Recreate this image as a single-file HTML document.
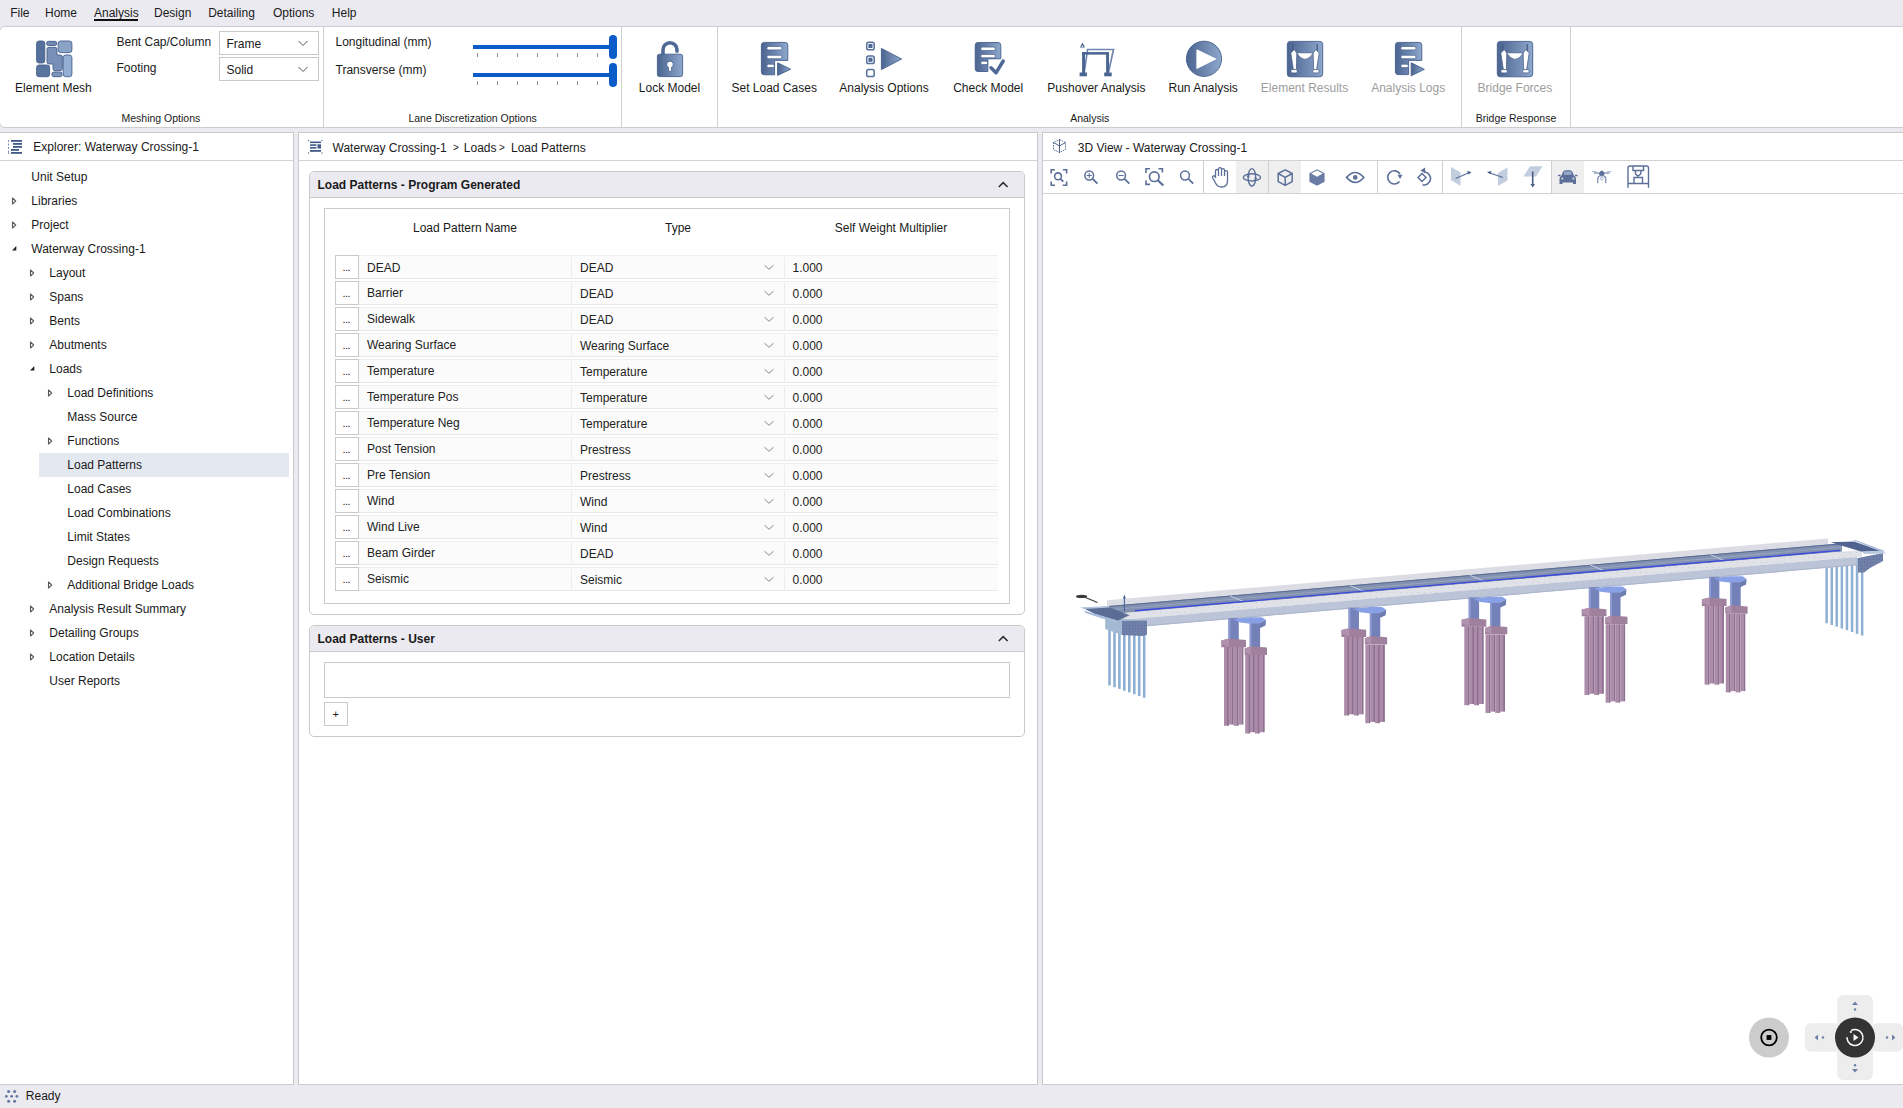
<!DOCTYPE html>
<html><head><meta charset="utf-8">
<style>
*{box-sizing:border-box;margin:0;padding:0}
html,body{width:1903px;height:1108px;overflow:hidden;background:#ECEAF1;font-family:"Liberation Sans",sans-serif;font-size:12px;color:#1a1a1a;position:relative}
.a{position:absolute}
.t{position:absolute;white-space:nowrap;line-height:16px;font-size:12px}
.c{transform:translateX(-50%)}
.g{position:absolute;white-space:nowrap;line-height:14px;font-size:10.5px;transform:translateX(-50%)}
.dis{color:#9d9d9d}
.panel{position:absolute;background:#fff;border:1px solid #cbcbcb}
.hline{position:absolute;height:1px;background:#cfcfcf}
.vline{position:absolute;width:1px;background:#d0d0d0}
.dd{position:absolute;border:1px solid #c8c8c8;background:#fff}
.btn{position:absolute;width:24px;height:24px;border:1px solid #c9c9c9;background:#fff}
.cell{position:absolute;height:24px;background:#fbfbfb;border-top:1px solid #efefef;border-bottom:1px solid #e8e8e8}
svg{position:absolute;overflow:visible}
</style></head><body>

<!-- MENU -->
<div class="t" style="left:10.2px;top:5.2px">File</div>
<div class="t" style="left:45px;top:5.2px">Home</div>
<div class="t" style="left:94px;top:5.2px">Analysis</div>
<div class="a" style="left:94px;top:19px;width:44px;height:2px;background:#111"></div>
<div class="t" style="left:154px;top:5.2px">Design</div>
<div class="t" style="left:208.2px;top:5.2px">Detailing</div>
<div class="t" style="left:273px;top:5.2px">Options</div>
<div class="t" style="left:331.8px;top:5.2px">Help</div>

<!-- RIBBON -->
<div class="a" style="left:-1px;top:26px;width:1910px;height:102px;background:#fff;border:1px solid #cdcdcd;border-radius:6px 0 0 6px"></div>
<div class="vline" style="left:323px;top:27px;height:100px"></div>
<div class="vline" style="left:621px;top:27px;height:100px"></div>
<div class="vline" style="left:717px;top:27px;height:100px"></div>
<div class="vline" style="left:1461px;top:27px;height:100px"></div>
<div class="vline" style="left:1570px;top:27px;height:100px"></div>


<svg style="left:0;top:0;z-index:2" width="1903" height="130" viewBox="0 0 1903 130">
<defs>
<linearGradient id="ig" x1="0" y1="0" x2="1" y2="0"><stop offset="0" stop-color="#4b6490"/><stop offset="1" stop-color="#8ea7cc"/></linearGradient>
<linearGradient id="ig2" x1="0" y1="0" x2="1" y2="0"><stop offset="0" stop-color="#6880aa"/><stop offset="1" stop-color="#98b2d6"/></linearGradient>
</defs>
<!-- Element Mesh -->
<g stroke="#44608c" stroke-width="0.9">
<rect x="36.6" y="41" width="8.2" height="22" rx="2.5" fill="#56709c"/>
<rect x="46.5" y="41.3" width="10.4" height="4.2" rx="2" fill="#7089b2"/>
<rect x="58.2" y="41" width="13.7" height="11.6" rx="2.5" fill="#89a2c6"/>
<path d="M47,49 Q47,47.3 49,47.3 L55,47.3 Q57,47.3 57,49.5 L57,55 L60.5,55 Q62.3,55 62.3,57 L62.3,68.5 Q62.3,70.7 60,70.7 L55,70.7 Q53,70.7 53,68.5 L53,64 L49,64 Q47,64 47,62 Z" fill="#7890b8"/>
<rect x="63.2" y="55" width="8.7" height="21.7" rx="2.5" fill="#92aed2"/>
<rect x="36.6" y="65" width="13" height="11.7" rx="2.5" fill="#5a74a0"/>
<rect x="51.9" y="72" width="10.2" height="4.7" rx="2" fill="#7c95bb"/>
</g>
<!-- sliders -->
<g fill="#0b5cc8">
<rect x="473" y="45" width="140" height="4"/><rect x="609" y="35" width="8" height="24" rx="4"/>
<rect x="473" y="73" width="140" height="4"/><rect x="609" y="63" width="8" height="24" rx="4"/>
</g>
<g stroke="#8f8f8f" stroke-width="1">
<path d="M477.5,53V57M497.5,53V57M517.5,53V57M537.5,53V57M557.5,53V57M577.5,53V57M597.5,53V57"/>
<path d="M477.5,81V85M497.5,81V85M517.5,81V85M537.5,81V85M557.5,81V85M577.5,81V85M597.5,81V85"/>
</g>
<!-- dropdown chevrons -->
<g stroke="#555" stroke-width="1" fill="none">
<path d="M298.5,41 L303,45.5 L307.5,41"/><path d="M298.5,67 L303,71.5 L307.5,67"/>
</g>
<!-- Lock -->
<path d="M663,54 V49.8 A7,7 0 0 1 677,49.8 V51.3" stroke="#4f6995" stroke-width="3.6" fill="none" stroke-linecap="round"/>
<rect x="657.4" y="54.2" width="25.2" height="22.4" rx="2.2" fill="url(#ig)" stroke="#44608c" stroke-width="0.9"/>
<path d="M670,61.2 A3.2,3.2 0 0 1 671.6,67.2 L671.6,70.3 Q671.6,71.2 670.7,71.2 L669.3,71.2 Q668.4,71.2 668.4,70.3 L668.4,67.2 A3.2,3.2 0 0 1 670,61.2 Z" fill="#fff" stroke="#3f5a86" stroke-width="0.8"/>
<!-- Set Load Cases --><path d="M764.2,42.4 H785.0 Q787.8,42.4 787.8,45.2 V60.4 H774.6 V74.8 H764.2 Q761.4,74.8 761.4,72.0 V45.2 Q761.4,42.4 764.2,42.4 Z" fill="url(#ig)" stroke="#44608c" stroke-width="0.9"/><rect x="766.8" y="46.5" width="15.2" height="3.4" rx="1.7" fill="#fff" stroke="#44608c" stroke-width="0.7"/><rect x="766.8" y="55.3" width="15.2" height="3.4" rx="1.7" fill="#fff" stroke="#44608c" stroke-width="0.7"/><rect x="766.8" y="64.2" width="7.6" height="3.4" rx="1.7" fill="#fff" stroke="#44608c" stroke-width="0.7"/><path d="M777.6,62.8 L790.6,69.2 L777.6,75.4 Z" fill="url(#ig)" stroke="#44608c" stroke-width="0.9" stroke-linejoin="round"/>
<!-- Analysis Options -->
<g stroke="#56709c" stroke-width="1.5" fill="none">
<rect x="866.7" y="42.2" width="7.5" height="7.5" rx="1.8"/><rect x="866.7" y="56" width="7.5" height="7.5" rx="1.8"/><rect x="866.7" y="69.4" width="7.5" height="7.2" rx="1.8"/>
</g>
<rect x="868.4" y="43.9" width="4.1" height="4.1" fill="#4f6894"/><rect x="868.4" y="57.7" width="4.1" height="4.1" fill="#4f6894"/>
<path d="M881.4,48.4 L901.6,59 L881.4,69.6 Z" fill="url(#ig)" stroke="#44608c" stroke-width="0.9" stroke-linejoin="round"/>
<!-- Check Model --><path d="M978.0,42.5 H998.0 Q1000.8,42.5 1000.8,45.3 V58.8 H987.9 V71.5 H978.0 Q975.2,71.5 975.2,68.7 V45.3 Q975.2,42.5 978.0,42.5 Z" fill="url(#ig)" stroke="#44608c" stroke-width="0.9"/><rect x="980.7" y="47.1" width="14.7" height="3.4" rx="1.7" fill="#fff" stroke="#44608c" stroke-width="0.7"/><rect x="980.7" y="54.4" width="14.7" height="3.4" rx="1.7" fill="#fff" stroke="#44608c" stroke-width="0.7"/><rect x="980.7" y="61.2" width="7" height="3.4" rx="1.7" fill="#fff" stroke="#44608c" stroke-width="0.7"/><path d="M991,67.8 L996,72.8 L1003.2,61" stroke="#4d6894" stroke-width="3.4" fill="none" stroke-linecap="round" stroke-linejoin="round"/>
<!-- Pushover -->
<path d="M1082.5,42.5 L1085,47.6 L1080,47.6 Z" fill="#44608c"/><path d="M1082.5,45.2 L1083.4,47 L1081.6,47 Z" fill="#fff"/>
<path d="M1084.3,71.8 L1087.6,49.5 L1113.5,49.5 L1108.6,71.8" stroke="#7088b0" stroke-width="1.7" fill="none" stroke-linejoin="miter"/>
<g fill="#4a6591">
<rect x="1082.1" y="52.1" width="26.8" height="2.5"/><rect x="1082.1" y="52.1" width="2.9" height="21"/><rect x="1106.1" y="52.1" width="2.9" height="21"/>
<rect x="1079.6" y="72.5" width="7.3" height="3.8"/><rect x="1104.2" y="72.5" width="7.5" height="3.8"/>
</g>
<!-- Run Analysis -->
<circle cx="1204" cy="58.8" r="17.6" fill="url(#ig)" stroke="#44608c" stroke-width="0.9"/>
<path d="M1197,50 L1215.5,59 L1197,68.3 Z" fill="#fff" stroke="#fff" stroke-width="1.2" stroke-linejoin="round"/>
<!-- Element Results -->
<g>
<rect x="1287.3" y="41.4" width="35.4" height="35.4" rx="3" fill="url(#ig)" stroke="#445f8b" stroke-width="0.9"/>
<path d="M1292.8,44 V51 M1317.2,44 V51" stroke="#3e5680" stroke-width="1.1"/>
<g fill="#fff" stroke="#3e5680" stroke-width="0.7">
<path d="M1296.5,52.8 H1313.5 Q1305,66 1296.5,52.8 Z"/>
<path d="M1294.2,49.6 L1296.8,53 L1296.4,69.8 L1293.4,69.8 L1290.8,53 Z"/>
<path d="M1315.8,49.6 L1313.2,53 L1313.6,69.8 L1316.6,69.8 L1319.2,53 Z"/>
<rect x="1291" y="69.6" width="6.2" height="3.3" rx="0.8"/><rect x="1312.8" y="69.6" width="6.2" height="3.3" rx="0.8"/>
</g>
</g>
<g transform="translate(210,0)">
<rect x="1287.3" y="41.4" width="35.4" height="35.4" rx="3" fill="url(#ig)" stroke="#445f8b" stroke-width="0.9"/>
<path d="M1292.8,44 V51 M1317.2,44 V51" stroke="#3e5680" stroke-width="1.1"/>
<g fill="#fff" stroke="#3e5680" stroke-width="0.7">
<path d="M1296.5,52.8 H1313.5 Q1305,66 1296.5,52.8 Z"/>
<path d="M1294.2,49.6 L1296.8,53 L1296.4,69.8 L1293.4,69.8 L1290.8,53 Z"/>
<path d="M1315.8,49.6 L1313.2,53 L1313.6,69.8 L1316.6,69.8 L1319.2,53 Z"/>
<rect x="1291" y="69.6" width="6.2" height="3.3" rx="0.8"/><rect x="1312.8" y="69.6" width="6.2" height="3.3" rx="0.8"/>
</g>
</g>
<!-- Analysis Logs --><path d="M1398.2,42.4 H1419.0 Q1421.8,42.4 1421.8,45.2 V60.4 H1408.6 V74.6 H1398.2 Q1395.4,74.6 1395.4,71.8 V45.2 Q1395.4,42.4 1398.2,42.4 Z" fill="url(#ig)" stroke="#44608c" stroke-width="0.9"/><rect x="1400.8" y="46.5" width="15.2" height="3.4" rx="1.7" fill="#fff" stroke="#44608c" stroke-width="0.7"/><rect x="1400.8" y="55.3" width="15.2" height="3.4" rx="1.7" fill="#fff" stroke="#44608c" stroke-width="0.7"/><rect x="1400.8" y="64.2" width="7.6" height="3.4" rx="1.7" fill="#fff" stroke="#44608c" stroke-width="0.7"/><path d="M1411.2,62.8 L1424.4,69.3 L1411.2,75.8 Z" fill="url(#ig)" stroke="#44608c" stroke-width="0.9" stroke-linejoin="round"/>
</svg>

<div class="dd" style="left:219px;top:31px;width:100px;height:24px"></div>
<div class="dd" style="left:219px;top:57px;width:100px;height:24px"></div>
<div class="t" style="left:116.5px;top:34px">Bent Cap/Column</div>
<div class="t" style="left:116.5px;top:59.5px">Footing</div>
<div class="t" style="left:226.5px;top:35.5px">Frame</div>
<div class="t" style="left:226.5px;top:61.5px">Solid</div>
<div class="t" style="left:335.5px;top:34px">Longitudinal (mm)</div>
<div class="t" style="left:335.5px;top:62px">Transverse (mm)</div>

<div class="t c" style="left:53.4px;top:80px">Element Mesh</div>
<div class="t c" style="left:669.5px;top:80px">Lock Model</div>
<div class="t c" style="left:774.2px;top:80px">Set Load Cases</div>
<div class="t c" style="left:884px;top:80px">Analysis Options</div>
<div class="t c" style="left:988.2px;top:80px">Check Model</div>
<div class="t c" style="left:1096.4px;top:80px">Pushover Analysis</div>
<div class="t c" style="left:1203.2px;top:80px">Run Analysis</div>
<div class="t c dis" style="left:1304.5px;top:80px">Element Results</div>
<div class="t c dis" style="left:1408.2px;top:80px">Analysis Logs</div>
<div class="t c dis" style="left:1514.9px;top:80px">Bridge Forces</div>

<div class="g" style="left:160.9px;top:111.4px">Meshing Options</div>
<div class="g" style="left:472.6px;top:111.4px">Lane Discretization Options</div>
<div class="g" style="left:1089.7px;top:111.2px">Analysis</div>
<div class="g" style="left:1516px;top:111.2px">Bridge Response</div>


<!-- PANELS -->
<div class="panel" style="left:-1px;top:132px;width:295px;height:953px"></div>
<div class="panel" style="left:298px;top:132px;width:740px;height:953px"></div>
<div class="panel" style="left:1042px;top:132px;width:870px;height:953px"></div>

<div class="hline" style="left:0;top:160px;width:293px;background:#d2d2d2"></div>
<div class="a" style="left:39px;top:453px;width:250px;height:24px;background:#E4E8F0"></div>
<div class="t" style="left:33.3px;top:138.7px">Explorer: Waterway Crossing-1</div>
<div class="t" style="left:31.3px;top:168.6px">Unit Setup</div>
<div class="t" style="left:31.3px;top:192.6px">Libraries</div>
<div class="t" style="left:31.3px;top:216.6px">Project</div>
<div class="t" style="left:31.3px;top:240.6px">Waterway Crossing-1</div>
<div class="t" style="left:49.3px;top:264.6px">Layout</div>
<div class="t" style="left:49.3px;top:288.6px">Spans</div>
<div class="t" style="left:49.3px;top:312.6px">Bents</div>
<div class="t" style="left:49.3px;top:336.6px">Abutments</div>
<div class="t" style="left:49.3px;top:360.6px">Loads</div>
<div class="t" style="left:67.3px;top:384.6px">Load Definitions</div>
<div class="t" style="left:67.3px;top:408.6px">Mass Source</div>
<div class="t" style="left:67.3px;top:432.6px">Functions</div>
<div class="t" style="left:67.3px;top:456.6px">Load Patterns</div>
<div class="t" style="left:67.3px;top:480.6px">Load Cases</div>
<div class="t" style="left:67.3px;top:504.6px">Load Combinations</div>
<div class="t" style="left:67.3px;top:528.6px">Limit States</div>
<div class="t" style="left:67.3px;top:552.6px">Design Requests</div>
<div class="t" style="left:67.3px;top:576.6px">Additional Bridge Loads</div>
<div class="t" style="left:49.3px;top:600.6px">Analysis Result Summary</div>
<div class="t" style="left:49.3px;top:624.6px">Detailing Groups</div>
<div class="t" style="left:49.3px;top:648.6px">Location Details</div>
<div class="t" style="left:49.3px;top:672.6px">User Reports</div>
<svg style="left:0;top:0" width="300" height="700"><g fill="none" stroke="#5a5a5a" stroke-width="1.1" stroke-linejoin="round"><path d="M12.5,198.0 L15.7,201.0 L12.5,204.0 Z"/><path d="M12.5,222.0 L15.7,225.0 L12.5,228.0 Z"/><path d="M16.3,246.0 L16.3,250.5 L12.0,250.5 Z" fill="#222" stroke="none"/><path d="M30.5,270.0 L33.7,273.0 L30.5,276.0 Z"/><path d="M30.5,294.0 L33.7,297.0 L30.5,300.0 Z"/><path d="M30.5,318.0 L33.7,321.0 L30.5,324.0 Z"/><path d="M30.5,342.0 L33.7,345.0 L30.5,348.0 Z"/><path d="M34.3,366.0 L34.3,370.5 L30.0,370.5 Z" fill="#222" stroke="none"/><path d="M48.5,390.0 L51.7,393.0 L48.5,396.0 Z"/><path d="M48.5,438.0 L51.7,441.0 L48.5,444.0 Z"/><path d="M48.5,582.0 L51.7,585.0 L48.5,588.0 Z"/><path d="M30.5,606.0 L33.7,609.0 L30.5,612.0 Z"/><path d="M30.5,630.0 L33.7,633.0 L30.5,636.0 Z"/><path d="M30.5,654.0 L33.7,657.0 L30.5,660.0 Z"/></g>
<g fill="#3f5a86"><rect x="11" y="140" width="11" height="1.8"/><rect x="13" y="143" width="9" height="1.8"/><rect x="13" y="146" width="9" height="1.8"/><rect x="11" y="149" width="8" height="1.8"/><rect x="11" y="152" width="11" height="1.8"/></g>
<g fill="#6f84aa"><rect x="8" y="140" width="0.9" height="2"/><rect x="8" y="143.5" width="0.9" height="2"/><rect x="8" y="147" width="0.9" height="2"/><rect x="8" y="150.5" width="0.9" height="2"/><rect x="8" y="152.5" width="0.9" height="1.5"/></g>
<g fill="#62769e"><circle cx="8.6" cy="1091.4" r="1.5"/><circle cx="14.6" cy="1091.4" r="1.5"/><circle cx="6.3" cy="1096.3" r="1.4"/><circle cx="11.6" cy="1096.3" r="1.4"/><circle cx="16.9" cy="1096.3" r="1.4"/><circle cx="8.6" cy="1101.2" r="1.5"/><circle cx="14.6" cy="1101.2" r="1.5"/></g>
</svg>
<div class="hline" style="left:299px;top:160px;width:738px;background:#d2d2d2"></div>
<div class="t" style="left:332.5px;top:140.2px">Waterway Crossing-1</div>
<div class="t" style="left:453px;top:140.2px;font-size:10px">&gt;</div>
<div class="t" style="left:463.8px;top:140.2px">Loads</div>
<div class="t" style="left:499px;top:140.2px;font-size:10px">&gt;</div>
<div class="t" style="left:511px;top:140.2px">Load Patterns</div>
<div class="a" style="left:309px;top:171px;width:716px;height:444px;border:1px solid #c9c9c9;border-radius:5px;background:#fff"></div>
<div class="a" style="left:310px;top:172px;width:714px;height:25px;background:#ECEAF1;border-radius:4px 4px 0 0;border-bottom:1px solid #c9c9c9;height:26px"></div>
<div class="t" style="left:317.5px;top:176.7px;font-weight:bold">Load Patterns - Program Generated</div>
<div class="a" style="left:324px;top:208px;width:686px;height:396px;border:1px solid #cbcbcb"></div>
<div class="t c" style="left:465px;top:219.6px">Load Pattern Name</div>
<div class="t c" style="left:678px;top:219.6px">Type</div>
<div class="t c" style="left:891px;top:219.6px">Self Weight Multiplier</div>
<div class="btn" style="left:335px;top:255px"></div>
<div class="cell" style="left:359px;top:255px;width:639px"></div>
<div class="a" style="left:571px;top:257px;width:1px;height:21px;background:#ececec"></div>
<div class="a" style="left:784px;top:257px;width:1px;height:21px;background:#ececec"></div>
<div class="t" style="left:342.5px;top:259.2px;font-size:11px;letter-spacing:-0.5px">...</div>
<div class="t" style="left:367px;top:259.6px;color:#222">DEAD</div>
<div class="t" style="left:580px;top:259.6px;color:#222">DEAD</div>
<div class="t" style="left:792.5px;top:259.6px;color:#222">1.000</div>
<div class="btn" style="left:335px;top:281px"></div>
<div class="cell" style="left:359px;top:281px;width:639px"></div>
<div class="a" style="left:571px;top:283px;width:1px;height:21px;background:#ececec"></div>
<div class="a" style="left:784px;top:283px;width:1px;height:21px;background:#ececec"></div>
<div class="t" style="left:342.5px;top:285.2px;font-size:11px;letter-spacing:-0.5px">...</div>
<div class="t" style="left:367px;top:284.8px;color:#222">Barrier</div>
<div class="t" style="left:580px;top:285.6px;color:#222">DEAD</div>
<div class="t" style="left:792.5px;top:285.6px;color:#222">0.000</div>
<div class="btn" style="left:335px;top:307px"></div>
<div class="cell" style="left:359px;top:307px;width:639px"></div>
<div class="a" style="left:571px;top:309px;width:1px;height:21px;background:#ececec"></div>
<div class="a" style="left:784px;top:309px;width:1px;height:21px;background:#ececec"></div>
<div class="t" style="left:342.5px;top:311.2px;font-size:11px;letter-spacing:-0.5px">...</div>
<div class="t" style="left:367px;top:310.8px;color:#222">Sidewalk</div>
<div class="t" style="left:580px;top:311.6px;color:#222">DEAD</div>
<div class="t" style="left:792.5px;top:311.6px;color:#222">0.000</div>
<div class="btn" style="left:335px;top:333px"></div>
<div class="cell" style="left:359px;top:333px;width:639px"></div>
<div class="a" style="left:571px;top:335px;width:1px;height:21px;background:#ececec"></div>
<div class="a" style="left:784px;top:335px;width:1px;height:21px;background:#ececec"></div>
<div class="t" style="left:342.5px;top:337.2px;font-size:11px;letter-spacing:-0.5px">...</div>
<div class="t" style="left:367px;top:336.8px;color:#222">Wearing Surface</div>
<div class="t" style="left:580px;top:337.6px;color:#222">Wearing Surface</div>
<div class="t" style="left:792.5px;top:337.6px;color:#222">0.000</div>
<div class="btn" style="left:335px;top:359px"></div>
<div class="cell" style="left:359px;top:359px;width:639px"></div>
<div class="a" style="left:571px;top:361px;width:1px;height:21px;background:#ececec"></div>
<div class="a" style="left:784px;top:361px;width:1px;height:21px;background:#ececec"></div>
<div class="t" style="left:342.5px;top:363.2px;font-size:11px;letter-spacing:-0.5px">...</div>
<div class="t" style="left:367px;top:362.8px;color:#222">Temperature</div>
<div class="t" style="left:580px;top:363.6px;color:#222">Temperature</div>
<div class="t" style="left:792.5px;top:363.6px;color:#222">0.000</div>
<div class="btn" style="left:335px;top:385px"></div>
<div class="cell" style="left:359px;top:385px;width:639px"></div>
<div class="a" style="left:571px;top:387px;width:1px;height:21px;background:#ececec"></div>
<div class="a" style="left:784px;top:387px;width:1px;height:21px;background:#ececec"></div>
<div class="t" style="left:342.5px;top:389.2px;font-size:11px;letter-spacing:-0.5px">...</div>
<div class="t" style="left:367px;top:388.8px;color:#222">Temperature Pos</div>
<div class="t" style="left:580px;top:389.6px;color:#222">Temperature</div>
<div class="t" style="left:792.5px;top:389.6px;color:#222">0.000</div>
<div class="btn" style="left:335px;top:411px"></div>
<div class="cell" style="left:359px;top:411px;width:639px"></div>
<div class="a" style="left:571px;top:413px;width:1px;height:21px;background:#ececec"></div>
<div class="a" style="left:784px;top:413px;width:1px;height:21px;background:#ececec"></div>
<div class="t" style="left:342.5px;top:415.2px;font-size:11px;letter-spacing:-0.5px">...</div>
<div class="t" style="left:367px;top:414.8px;color:#222">Temperature Neg</div>
<div class="t" style="left:580px;top:415.6px;color:#222">Temperature</div>
<div class="t" style="left:792.5px;top:415.6px;color:#222">0.000</div>
<div class="btn" style="left:335px;top:437px"></div>
<div class="cell" style="left:359px;top:437px;width:639px"></div>
<div class="a" style="left:571px;top:439px;width:1px;height:21px;background:#ececec"></div>
<div class="a" style="left:784px;top:439px;width:1px;height:21px;background:#ececec"></div>
<div class="t" style="left:342.5px;top:441.2px;font-size:11px;letter-spacing:-0.5px">...</div>
<div class="t" style="left:367px;top:440.8px;color:#222">Post Tension</div>
<div class="t" style="left:580px;top:441.6px;color:#222">Prestress</div>
<div class="t" style="left:792.5px;top:441.6px;color:#222">0.000</div>
<div class="btn" style="left:335px;top:463px"></div>
<div class="cell" style="left:359px;top:463px;width:639px"></div>
<div class="a" style="left:571px;top:465px;width:1px;height:21px;background:#ececec"></div>
<div class="a" style="left:784px;top:465px;width:1px;height:21px;background:#ececec"></div>
<div class="t" style="left:342.5px;top:467.2px;font-size:11px;letter-spacing:-0.5px">...</div>
<div class="t" style="left:367px;top:466.8px;color:#222">Pre Tension</div>
<div class="t" style="left:580px;top:467.6px;color:#222">Prestress</div>
<div class="t" style="left:792.5px;top:467.6px;color:#222">0.000</div>
<div class="btn" style="left:335px;top:489px"></div>
<div class="cell" style="left:359px;top:489px;width:639px"></div>
<div class="a" style="left:571px;top:491px;width:1px;height:21px;background:#ececec"></div>
<div class="a" style="left:784px;top:491px;width:1px;height:21px;background:#ececec"></div>
<div class="t" style="left:342.5px;top:493.2px;font-size:11px;letter-spacing:-0.5px">...</div>
<div class="t" style="left:367px;top:492.8px;color:#222">Wind</div>
<div class="t" style="left:580px;top:493.6px;color:#222">Wind</div>
<div class="t" style="left:792.5px;top:493.6px;color:#222">0.000</div>
<div class="btn" style="left:335px;top:515px"></div>
<div class="cell" style="left:359px;top:515px;width:639px"></div>
<div class="a" style="left:571px;top:517px;width:1px;height:21px;background:#ececec"></div>
<div class="a" style="left:784px;top:517px;width:1px;height:21px;background:#ececec"></div>
<div class="t" style="left:342.5px;top:519.2px;font-size:11px;letter-spacing:-0.5px">...</div>
<div class="t" style="left:367px;top:518.8px;color:#222">Wind Live</div>
<div class="t" style="left:580px;top:519.6px;color:#222">Wind</div>
<div class="t" style="left:792.5px;top:519.6px;color:#222">0.000</div>
<div class="btn" style="left:335px;top:541px"></div>
<div class="cell" style="left:359px;top:541px;width:639px"></div>
<div class="a" style="left:571px;top:543px;width:1px;height:21px;background:#ececec"></div>
<div class="a" style="left:784px;top:543px;width:1px;height:21px;background:#ececec"></div>
<div class="t" style="left:342.5px;top:545.2px;font-size:11px;letter-spacing:-0.5px">...</div>
<div class="t" style="left:367px;top:544.8px;color:#222">Beam Girder</div>
<div class="t" style="left:580px;top:545.6px;color:#222">DEAD</div>
<div class="t" style="left:792.5px;top:545.6px;color:#222">0.000</div>
<div class="btn" style="left:335px;top:567px"></div>
<div class="cell" style="left:359px;top:567px;width:639px"></div>
<div class="a" style="left:571px;top:569px;width:1px;height:21px;background:#ececec"></div>
<div class="a" style="left:784px;top:569px;width:1px;height:21px;background:#ececec"></div>
<div class="t" style="left:342.5px;top:571.2px;font-size:11px;letter-spacing:-0.5px">...</div>
<div class="t" style="left:367px;top:570.8px;color:#222">Seismic</div>
<div class="t" style="left:580px;top:571.6px;color:#222">Seismic</div>
<div class="t" style="left:792.5px;top:571.6px;color:#222">0.000</div>
<svg style="left:0;top:0;z-index:3" width="1040" height="750"><path d="M764.5,265.2 L769,269.3 L773.5,265.2 M764.5,291.2 L769,295.3 L773.5,291.2 M764.5,317.2 L769,321.3 L773.5,317.2 M764.5,343.2 L769,347.3 L773.5,343.2 M764.5,369.2 L769,373.3 L773.5,369.2 M764.5,395.2 L769,399.3 L773.5,395.2 M764.5,421.2 L769,425.3 L773.5,421.2 M764.5,447.2 L769,451.3 L773.5,447.2 M764.5,473.2 L769,477.3 L773.5,473.2 M764.5,499.2 L769,503.3 L773.5,499.2 M764.5,525.2 L769,529.3 L773.5,525.2 M764.5,551.2 L769,555.3 L773.5,551.2 M764.5,577.2 L769,581.3 L773.5,577.2" stroke="#8a8a8a" stroke-width="1" fill="none"/>
<path d="M998.8,187 L1003.2,182.6 L1007.6,187 M998.8,641 L1003.2,636.6 L1007.6,641" stroke="#2a2a2a" stroke-width="1.5" fill="none"/>
<g fill="#3f5a86"><rect x="310" y="141.5" width="11" height="1.6"/><rect x="310" y="144.3" width="6.5" height="1.6"/><rect x="317.5" y="144.3" width="3.5" height="4.2"/><rect x="310" y="147" width="6.5" height="1.6"/><rect x="310" y="150" width="11" height="1.8"/></g>
<g fill="#5a6f99"><circle cx="308.5" cy="140.5" r="0.7"/><circle cx="322" cy="140.5" r="0.7"/><circle cx="308.5" cy="153" r="0.7"/><circle cx="322" cy="153" r="0.7"/></g>
</svg>
<div class="a" style="left:309px;top:625px;width:716px;height:112px;border:1px solid #c9c9c9;border-radius:5px;background:#fff"></div>
<div class="a" style="left:310px;top:626px;width:714px;height:26px;background:#ECEAF1;border-radius:4px 4px 0 0;border-bottom:1px solid #c9c9c9"></div>
<div class="t" style="left:317.5px;top:630.7px;font-weight:bold">Load Patterns - User</div>
<div class="a" style="left:324px;top:662px;width:686px;height:36px;border:1px solid #c9c9c9"></div>
<div class="a" style="left:324px;top:702px;width:24px;height:24px;border:1px solid #c9c9c9"></div>
<div class="t" style="left:332.5px;top:706px;font-size:11px">+</div>
<div class="hline" style="left:1043px;top:160px;width:860px;background:#d2d2d2"></div>
<div class="hline" style="left:1043px;top:193px;width:860px;background:#d2d2d2"></div>
<div class="t" style="left:1077.8px;top:140.1px">3D View - Waterway Crossing-1</div>
<div class="a" style="left:1236px;top:161px;width:32px;height:32px;background:#efefef"></div>
<div class="a" style="left:1269px;top:161px;width:32px;height:32px;background:#efefef"></div>
<div class="a" style="left:1552px;top:161px;width:32px;height:32px;background:#efefef"></div>
<div class="a" style="left:1203px;top:161px;width:1px;height:32px;background:#cfcfcf"></div>
<div class="a" style="left:1268px;top:161px;width:1px;height:32px;background:#cfcfcf"></div>
<div class="a" style="left:1377px;top:161px;width:1px;height:32px;background:#cfcfcf"></div>
<div class="a" style="left:1442px;top:161px;width:1px;height:32px;background:#cfcfcf"></div>
<div class="a" style="left:1551px;top:161px;width:1px;height:32px;background:#cfcfcf"></div>

<svg style="left:0;top:0;z-index:2" width="1903" height="1108">
<g stroke="#5b6f99" fill="none" stroke-width="1.5" stroke-linecap="butt">
<!-- cube header icon -->
<path d="M1059.5,139.5 L1065.5,142.5 L1065.5,149.5 L1059.5,152.5 L1053.5,149.5 L1053.5,142.5 Z" stroke-width="1" stroke-dasharray="1.5,1"/>
<path d="M1059.5,139 V153 M1053.5,142.5 L1059.5,146 L1065.5,142.5" stroke-width="0.9" stroke="#3b4f78"/>
<!-- 1 zoom extents -->
<path d="M1051.2,173.5 V169.8 H1055 M1062.8,169.8 H1066.6 V173.5 M1066.6,181.5 V185.2 H1062.8 M1055,185.2 H1051.2 V181.5" stroke-width="1.6"/>
<circle cx="1058" cy="176.3" r="3.4" stroke-width="1.6"/><path d="M1060.5,178.8 L1063.3,181.6" stroke-width="1.8"/>
<!-- 2 zoom in -->
<circle cx="1089.2" cy="175.5" r="4.4"/><path d="M1092.4,178.7 L1097.4,183.7" stroke-width="1.8"/><path d="M1086.6,175.5 H1091.8 M1089.2,172.9 V178.1" stroke-width="1"/>
<!-- 3 zoom out -->
<circle cx="1121.1" cy="175.5" r="4.4"/><path d="M1124.3,178.7 L1129.3,183.7" stroke-width="1.8"/><path d="M1118.5,175.5 H1123.7" stroke-width="1"/>
<!-- 4 zoom window -->
<path d="M1146,173 V168.8 H1150 M1158.5,168.8 H1162.4 V172.5 M1150,184.4 H1146 V180.5" stroke-width="1.6"/>
<circle cx="1154.3" cy="176.7" r="4.8" stroke-width="1.7"/><path d="M1157.8,180.2 L1163.3,185.5" stroke-width="2.2"/>
<!-- 5 magnifier -->
<circle cx="1185" cy="175.5" r="4.4"/><path d="M1188.2,178.7 L1193.2,183.7" stroke-width="1.8"/>
<!-- 6 hand -->
<path d="M1215.5,178 V171 Q1215.5,169.5 1217,169.5 Q1218.5,169.5 1218.5,171 V176 M1218.5,170 V168.8 Q1218.5,167.6 1220,167.6 Q1221.5,167.6 1221.5,169 V176 M1221.5,170 Q1221.5,168.6 1223,168.6 Q1224.5,168.6 1224.5,170 V176 M1224.5,172 Q1224.5,170.6 1226,170.6 Q1227.5,170.6 1227.5,172 V181 Q1227.5,187 1221.5,187 Q1217.5,187 1215.5,183 L1212.8,178 Q1212,176.2 1213.6,175.8 Q1214.8,175.6 1215.5,177" stroke-width="1.3"/>
<!-- 7 orbit -->
<ellipse cx="1251.9" cy="177.4" rx="3.8" ry="8.8" stroke-width="1.4"/>
<ellipse cx="1251.9" cy="177.4" rx="8.6" ry="3.6" stroke-width="1.4"/>
<!-- 8 cube -->
<path d="M1285.2,169.8 L1292.2,173.5 L1292.2,181.6 L1285.2,185.3 L1278.2,181.6 L1278.2,173.5 Z M1278.2,173.5 L1285.2,177.3 L1292.2,173.5 M1285.2,177.3 V185.3" stroke-width="1.5" stroke-linejoin="round"/>
<!-- 10 eye -->
<path d="M1346.5,177.4 Q1355.2,167.5 1363.8,177.4 Q1355.2,187.3 1346.5,177.4 Z" stroke-width="1.6"/>
<!-- 11 rotate -->
<path d="M1399.5,181.5 A6.6,6.6 0 1 1 1400,174" stroke-width="1.6"/>
<!-- 12 rotate diamond -->
<path d="M1424.5,172 A6.5,6.5 0 1 1 1422.5,184.8" stroke-width="1.6"/>
<path d="M1418,177.5 L1422,173.5 L1426,177.5 L1422,181.5 Z" stroke-width="1.5"/>
<!-- 18 frame -->
<path d="M1628,187.8 V168 Q1628,166 1630,166 H1646.5 Q1648.5,166 1648.5,168 V187.8 M1628,183.5 H1648.5 M1633,166 V170.5 H1643.5 V166 M1635.5,170.5 V174 L1638,176 L1640.8,174 V170.5 M1634,177.5 H1642.5 V183.5 H1634 Z" stroke-width="1.4"/>
</g>
<g fill="#5b6f99">
<circle cx="1355.2" cy="177.4" r="2.3"/>
<path d="M1397.5,174.8 L1402.6,174.8 L1400,179 Z"/>
<path d="M1420.5,170.5 L1425,167.5 L1425.5,173.5 Z"/>
<!-- solid cube -->
<path d="M1317,169.3 L1324.6,173.3 L1324.6,181.8 L1317,185.8 L1309.4,181.8 L1309.4,173.3 Z" fill="#6a7ca3"/>
<path d="M1317,170.6 L1322.8,173.6 L1317,176.7 L1311.2,173.6 Z" fill="#fff"/>
<!-- car -->
<path d="M1559.5,184 V179 Q1559.5,176.5 1561.5,175.5 L1563,171.8 Q1563.6,170.3 1565.5,170.3 H1570 Q1571.8,170.3 1572.4,171.8 L1574,175.5 Q1576,176.5 1576,179 V184 H1573 V182.5 H1562.5 V184 Z"/>
<path d="M1558,175.5 H1560.5 M1575,175.5 H1577.5" stroke="#5b6f99" stroke-width="1.4"/>
<rect x="1564" y="171.5" width="7.5" height="3.3" fill="#9aa9c5"/>
<circle cx="1562.3" cy="178.6" r="1.1" fill="#cfd8e8"/><circle cx="1573.3" cy="178.6" r="1.1" fill="#cfd8e8"/>
<!-- drone -->
<path d="M1594,172.5 H1599.5 Q1600.5,170.5 1601.8,170.5 Q1603.1,170.5 1604.1,172.5 H1609.5 V173.6 H1604.5 Q1604.8,175.5 1601.8,176.5 Q1598.8,175.5 1599.1,173.6 H1594 Z"/>
<path d="M1592,171.7 H1596.5 M1607,171.7 H1611.5" stroke="#8fa0c0" stroke-width="0.8"/>
<path d="M1597.8,183.3 V178 Q1598.5,175.5 1601.8,175.5 Q1605.1,175.5 1605.8,178 V183.3" fill="none" stroke="#6a7ea6" stroke-width="1.1"/>
<circle cx="1601.8" cy="178.5" r="1.4" fill="none" stroke="#8fa0c0" stroke-width="0.8"/>
</g>
<!-- orbit arrows -->
<g fill="#5b6f99"><path d="M1246.5,176.3 L1249.5,174.5 L1249.3,178 Z"/><path d="M1257.5,178.6 L1254.5,180.4 L1254.7,177 Z"/></g>
<!-- planes -->
<g>
<path d="M1451,167 L1460.5,172.5 L1460.5,185.8 L1451,180.3 Z" fill="#c3cde0"/>
<path d="M1455.5,178.5 L1469.5,172.5" stroke="#5b6f99" stroke-width="1.3"/><path d="M1467,171 L1471.5,172 L1468.5,174.5 Z" fill="#4a5e88"/>
<path d="M1507.5,167.5 L1498,173 L1498,186 L1507.5,180.5 Z" fill="#c3cde0"/>
<path d="M1503,177.5 L1488.5,172.5" stroke="#5b6f99" stroke-width="1.3"/><path d="M1487,172 L1491.5,171 L1490.5,174.3 Z" fill="#4a5e88"/>
<path d="M1523.5,176.5 L1530,166.2 L1542.5,166.2 L1536,176.5 Z" fill="#c3cde0"/>
<path d="M1532.7,171.5 V185.5" stroke="#4a5e88" stroke-width="1.6"/><path d="M1530.5,184 L1535,184 L1532.7,187.5 Z" fill="#4a5e88"/>
</g>
<!-- nav controls -->
<rect x="1837.2" y="995" width="35.7" height="36" rx="6" fill="#ededed"/>
<rect x="1837.2" y="1044" width="35.7" height="36" rx="6" fill="#ededed"/>
<rect x="1805" y="1023.2" width="36" height="28.5" rx="6" fill="#ededed"/>
<rect x="1871" y="1023.2" width="32" height="28.5" rx="6" fill="#ededed"/>
<circle cx="1855" cy="1037.5" r="20" fill="#333"/>
<circle cx="1855" cy="1037.5" r="8" fill="none" stroke="#fff" stroke-width="1.5" stroke-dasharray="42,8" transform="rotate(-120 1855 1037.5)"/>
<circle cx="1850.8" cy="1032" r="1.1" fill="#fff"/>
<path d="M1853.5,1034 L1858.5,1037.5 L1853.5,1041 Z" fill="#fff"/>
<circle cx="1769" cy="1037.5" r="20" fill="#cccccc"/>
<circle cx="1769" cy="1037.5" r="7.8" fill="none" stroke="#000" stroke-width="1.8"/>
<rect x="1766.6" y="1035.1" width="4.8" height="4.8" fill="#000"/>
<g fill="#6a7ea6">
<path d="M1852,1005 L1855,1001.4 L1858,1005 Z"/><circle cx="1855" cy="1009.5" r="1.2"/>
<path d="M1852,1069 L1855,1072.6 L1858,1069 Z"/><circle cx="1855" cy="1065.3" r="1.2"/>
<path d="M1818,1034.5 L1814.6,1037.5 L1818,1040.5 Z"/><circle cx="1823" cy="1037.5" r="1.2"/>
<path d="M1892,1034.5 L1895.4,1037.5 L1892,1040.5 Z"/><circle cx="1887" cy="1037.5" r="1.2"/>
</g>
</svg>

<!--BRIDGE--><svg style="left:0;top:0;z-index:1" width="1903" height="1108">
<defs><pattern id="dots" width="6" height="5" patternUnits="userSpaceOnUse"><rect width="1" height="1" x="2" y="2" fill="#c3cbe0"/></pattern><pattern id="hatch" width="3" height="3" patternUnits="userSpaceOnUse"><rect width="3" height="3" fill="#7080a8"/><rect width="1" height="1" x="1" y="1" fill="#5d6f9c"/></pattern></defs>
<rect x="1825.4" y="560" width="2.5" height="63.2" fill="#8fb0d2"/>
<rect x="1830.5" y="560" width="2.5" height="65.0" fill="#8fb0d2"/>
<rect x="1835.5" y="560" width="2.5" height="66.7" fill="#8fb0d2"/>
<rect x="1840.6" y="560" width="2.5" height="68.5" fill="#8fb0d2"/>
<rect x="1845.7" y="560" width="2.5" height="70.2" fill="#8fb0d2"/>
<rect x="1850.8" y="560" width="2.5" height="72.0" fill="#8fb0d2"/>
<rect x="1855.8" y="560" width="2.5" height="73.8" fill="#8fb0d2"/>
<rect x="1860.9" y="560" width="2.5" height="75.5" fill="#8fb0d2"/>
<rect x="1108.2" y="620" width="2.6" height="65.4" fill="#8eafd3"/>
<rect x="1113.2" y="620" width="2.6" height="67.2" fill="#8eafd3"/>
<rect x="1118.1" y="620" width="2.6" height="68.9" fill="#8eafd3"/>
<rect x="1123.0" y="620" width="2.6" height="70.7" fill="#8eafd3"/>
<rect x="1128.0" y="620" width="2.6" height="72.4" fill="#8eafd3"/>
<rect x="1133.0" y="620" width="2.6" height="74.2" fill="#8eafd3"/>
<rect x="1137.9" y="620" width="2.6" height="76.0" fill="#8eafd3"/>
<rect x="1142.9" y="620" width="2.6" height="77.7" fill="#8eafd3"/>
<polygon points="1107.0,600.2 1828.0,538.5 1828.0,545.0 1107.0,606.7" fill="#dcdce4"/>
<polygon points="1109.0,606.0 1842.0,543.3 1842.0,551.8 1109.0,614.5" fill="#8291b0"/>
<polygon points="1109.0,606.0 1842.0,543.3 1842.0,544.3 1109.0,607.0" fill="#5a6b92"/>
<polygon points="1109.0,609.5 1842.0,546.8 1842.0,547.6 1109.0,610.3" fill="#9aa8c4"/>
<path d="M1230.0,596.0 L1245.0,602.2" stroke="#c8d2e6" stroke-width="1"/>
<path d="M1350.2,585.7 L1365.2,591.9" stroke="#c8d2e6" stroke-width="1"/>
<path d="M1470.3,575.4 L1485.3,581.6" stroke="#c8d2e6" stroke-width="1"/>
<path d="M1590.5,565.1 L1605.5,571.3" stroke="#c8d2e6" stroke-width="1"/>
<path d="M1710.6,554.8 L1725.6,561.0" stroke="#c8d2e6" stroke-width="1"/>
<polygon points="1135.0,610.1 1840.0,549.8 1840.0,551.1 1135.0,611.4" fill="#3c49df"/>
<polygon points="1117.0,613.6 1862.0,549.9 1862.0,556.6 1117.0,620.3" fill="#e1e1e8"/>
<polygon points="1120.0,620.1 1857.0,557.0 1857.0,565.3 1120.0,628.4" fill="#bcc4d7"/>
<polygon points="1146.0,611.2 1857.0,550.3 1857.0,565.3 1146.0,626.2" fill="url(#dots)"/>
<polygon points="1146.0,625.2 1857.0,564.3 1857.0,565.3 1146.0,626.2" fill="#aab4cb"/>
<polygon points="1105.2,617.5 1147,621 1147,635 1122,635 1105.2,629" fill="#a3b9d3"/>
<polygon points="1122,621 1147,620.5 1147,634.5 1143,636 1122,635" fill="url(#hatch)"/>
<polygon points="1082.5,607.7 1108,606.7 1129.6,615.3 1117.6,620.7 1095,614" fill="#5b6c95"/>
<polygon points="1084,610.5 1117.5,620.5 1116,623 1085.5,613" fill="#a9bddb"/>
<polygon points="1080,607.5 1108,606 1110,607.5 1084,609" fill="#b3c4de"/>
<ellipse cx="1081.6" cy="596.4" rx="5.6" ry="1.6" fill="#3a3a3a"/><path d="M1085.5,597.5 L1097.5,602.6" stroke="#3a3a3a" stroke-width="1.1"/>
<path d="M1124.4,597 V611" stroke="#3f5c9c" stroke-width="1"/><path d="M1123,598.5 L1124.4,594.5 L1125.8,598.5 Z" fill="#3f5c9c"/>
<polygon points="1856.8,558 1864,558 1864,572 1856.8,572" fill="#9fb6d0"/>
<polygon points="1858,558 1883,553 1883,561 1870,568 1864,572.5 1858,572.5" fill="url(#hatch)"/>
<polygon points="1830.3,542.2 1854,541.4 1881.2,551.1 1862,551.7" fill="#4f6290"/>
<polygon points="1853,540.3 1855.5,540 1885,551 1882,552" fill="#a9bddb"/>
<polygon points="1862,551.5 1881,551 1886.5,553.5 1864,554" fill="#b8c8e0"/>
<g transform="translate(0.00,-0.00)"><rect x="1228.4" y="618" width="10.4" height="22" fill="#7683bb"/><rect x="1228.4" y="618" width="2" height="22" fill="#8e9bd3"/><polygon points="1221.3,640.4 1229,638.6 1246,640 1246,647.2 1221.3,647.2" fill="#a0819d"/><polygon points="1221.3,640.4 1229,638.6 1229,647.2 1221.3,643.6" fill="#b192ae"/><rect x="1224.0" y="647" width="3.1" height="78.8" fill="#ab8ba8"/><rect x="1227.0" y="647" width="1.9" height="78.8" fill="#8d7091"/><rect x="1228.8" y="647" width="3.1" height="77.6" fill="#ab8ba8"/><rect x="1231.8" y="647" width="1.9" height="77.6" fill="#8d7091"/><rect x="1233.7" y="647" width="3.1" height="78.8" fill="#ab8ba8"/><rect x="1236.7" y="647" width="1.9" height="78.8" fill="#8d7091"/><rect x="1238.5" y="647" width="3.1" height="77.6" fill="#ab8ba8"/><rect x="1241.5" y="647" width="1.9" height="77.6" fill="#8d7091"/><polygon points="1233,619 1250,617.3 1262,617.3 1266,620 1257,624.5 1240,622.5" fill="#88a0e6"/><polygon points="1257,624.5 1266,620 1265.5,625.5 1258.5,628.8" fill="#6c7db0"/><rect x="1249.7" y="623.5" width="10.4" height="24" fill="#7381b8"/><rect x="1249.7" y="623.5" width="1.8" height="24" fill="#8e9cd4"/><rect x="1245.2" y="655" width="3.1" height="78.5" fill="#ab8ba8"/><rect x="1248.2" y="655" width="1.9" height="78.5" fill="#8d7091"/><rect x="1250.0" y="655" width="3.1" height="77.2" fill="#ab8ba8"/><rect x="1253.0" y="655" width="1.9" height="77.2" fill="#8d7091"/><rect x="1254.9" y="655" width="3.1" height="78.5" fill="#ab8ba8"/><rect x="1257.9" y="655" width="1.9" height="78.5" fill="#8d7091"/><rect x="1259.8" y="655" width="3.1" height="77.2" fill="#ab8ba8"/><rect x="1262.8" y="655" width="1.9" height="77.2" fill="#8d7091"/><polygon points="1244.7,648.5 1251,646.3 1267,647.5 1267,654.9 1244.7,654.9" fill="#a0819d"/><polygon points="1244.7,648.5 1251,646.3 1251,654.9 1244.7,652" fill="#b192ae"/></g>
<g transform="translate(120.15,-10.28)"><rect x="1228.4" y="618" width="10.4" height="22" fill="#7683bb"/><rect x="1228.4" y="618" width="2" height="22" fill="#8e9bd3"/><polygon points="1221.3,640.4 1229,638.6 1246,640 1246,647.2 1221.3,647.2" fill="#a0819d"/><polygon points="1221.3,640.4 1229,638.6 1229,647.2 1221.3,643.6" fill="#b192ae"/><rect x="1224.0" y="647" width="3.1" height="78.8" fill="#ab8ba8"/><rect x="1227.0" y="647" width="1.9" height="78.8" fill="#8d7091"/><rect x="1228.8" y="647" width="3.1" height="77.6" fill="#ab8ba8"/><rect x="1231.8" y="647" width="1.9" height="77.6" fill="#8d7091"/><rect x="1233.7" y="647" width="3.1" height="78.8" fill="#ab8ba8"/><rect x="1236.7" y="647" width="1.9" height="78.8" fill="#8d7091"/><rect x="1238.5" y="647" width="3.1" height="77.6" fill="#ab8ba8"/><rect x="1241.5" y="647" width="1.9" height="77.6" fill="#8d7091"/><polygon points="1233,619 1250,617.3 1262,617.3 1266,620 1257,624.5 1240,622.5" fill="#88a0e6"/><polygon points="1257,624.5 1266,620 1265.5,625.5 1258.5,628.8" fill="#6c7db0"/><rect x="1249.7" y="623.5" width="10.4" height="24" fill="#7381b8"/><rect x="1249.7" y="623.5" width="1.8" height="24" fill="#8e9cd4"/><rect x="1245.2" y="655" width="3.1" height="78.5" fill="#ab8ba8"/><rect x="1248.2" y="655" width="1.9" height="78.5" fill="#8d7091"/><rect x="1250.0" y="655" width="3.1" height="77.2" fill="#ab8ba8"/><rect x="1253.0" y="655" width="1.9" height="77.2" fill="#8d7091"/><rect x="1254.9" y="655" width="3.1" height="78.5" fill="#ab8ba8"/><rect x="1257.9" y="655" width="1.9" height="78.5" fill="#8d7091"/><rect x="1259.8" y="655" width="3.1" height="77.2" fill="#ab8ba8"/><rect x="1262.8" y="655" width="1.9" height="77.2" fill="#8d7091"/><polygon points="1244.7,648.5 1251,646.3 1267,647.5 1267,654.9 1244.7,654.9" fill="#a0819d"/><polygon points="1244.7,648.5 1251,646.3 1251,654.9 1244.7,652" fill="#b192ae"/></g>
<g transform="translate(240.30,-20.56)"><rect x="1228.4" y="618" width="10.4" height="22" fill="#7683bb"/><rect x="1228.4" y="618" width="2" height="22" fill="#8e9bd3"/><polygon points="1221.3,640.4 1229,638.6 1246,640 1246,647.2 1221.3,647.2" fill="#a0819d"/><polygon points="1221.3,640.4 1229,638.6 1229,647.2 1221.3,643.6" fill="#b192ae"/><rect x="1224.0" y="647" width="3.1" height="78.8" fill="#ab8ba8"/><rect x="1227.0" y="647" width="1.9" height="78.8" fill="#8d7091"/><rect x="1228.8" y="647" width="3.1" height="77.6" fill="#ab8ba8"/><rect x="1231.8" y="647" width="1.9" height="77.6" fill="#8d7091"/><rect x="1233.7" y="647" width="3.1" height="78.8" fill="#ab8ba8"/><rect x="1236.7" y="647" width="1.9" height="78.8" fill="#8d7091"/><rect x="1238.5" y="647" width="3.1" height="77.6" fill="#ab8ba8"/><rect x="1241.5" y="647" width="1.9" height="77.6" fill="#8d7091"/><polygon points="1233,619 1250,617.3 1262,617.3 1266,620 1257,624.5 1240,622.5" fill="#88a0e6"/><polygon points="1257,624.5 1266,620 1265.5,625.5 1258.5,628.8" fill="#6c7db0"/><rect x="1249.7" y="623.5" width="10.4" height="24" fill="#7381b8"/><rect x="1249.7" y="623.5" width="1.8" height="24" fill="#8e9cd4"/><rect x="1245.2" y="655" width="3.1" height="78.5" fill="#ab8ba8"/><rect x="1248.2" y="655" width="1.9" height="78.5" fill="#8d7091"/><rect x="1250.0" y="655" width="3.1" height="77.2" fill="#ab8ba8"/><rect x="1253.0" y="655" width="1.9" height="77.2" fill="#8d7091"/><rect x="1254.9" y="655" width="3.1" height="78.5" fill="#ab8ba8"/><rect x="1257.9" y="655" width="1.9" height="78.5" fill="#8d7091"/><rect x="1259.8" y="655" width="3.1" height="77.2" fill="#ab8ba8"/><rect x="1262.8" y="655" width="1.9" height="77.2" fill="#8d7091"/><polygon points="1244.7,648.5 1251,646.3 1267,647.5 1267,654.9 1244.7,654.9" fill="#a0819d"/><polygon points="1244.7,648.5 1251,646.3 1251,654.9 1244.7,652" fill="#b192ae"/></g>
<g transform="translate(360.45,-30.84)"><rect x="1228.4" y="618" width="10.4" height="22" fill="#7683bb"/><rect x="1228.4" y="618" width="2" height="22" fill="#8e9bd3"/><polygon points="1221.3,640.4 1229,638.6 1246,640 1246,647.2 1221.3,647.2" fill="#a0819d"/><polygon points="1221.3,640.4 1229,638.6 1229,647.2 1221.3,643.6" fill="#b192ae"/><rect x="1224.0" y="647" width="3.1" height="78.8" fill="#ab8ba8"/><rect x="1227.0" y="647" width="1.9" height="78.8" fill="#8d7091"/><rect x="1228.8" y="647" width="3.1" height="77.6" fill="#ab8ba8"/><rect x="1231.8" y="647" width="1.9" height="77.6" fill="#8d7091"/><rect x="1233.7" y="647" width="3.1" height="78.8" fill="#ab8ba8"/><rect x="1236.7" y="647" width="1.9" height="78.8" fill="#8d7091"/><rect x="1238.5" y="647" width="3.1" height="77.6" fill="#ab8ba8"/><rect x="1241.5" y="647" width="1.9" height="77.6" fill="#8d7091"/><polygon points="1233,619 1250,617.3 1262,617.3 1266,620 1257,624.5 1240,622.5" fill="#88a0e6"/><polygon points="1257,624.5 1266,620 1265.5,625.5 1258.5,628.8" fill="#6c7db0"/><rect x="1249.7" y="623.5" width="10.4" height="24" fill="#7381b8"/><rect x="1249.7" y="623.5" width="1.8" height="24" fill="#8e9cd4"/><rect x="1245.2" y="655" width="3.1" height="78.5" fill="#ab8ba8"/><rect x="1248.2" y="655" width="1.9" height="78.5" fill="#8d7091"/><rect x="1250.0" y="655" width="3.1" height="77.2" fill="#ab8ba8"/><rect x="1253.0" y="655" width="1.9" height="77.2" fill="#8d7091"/><rect x="1254.9" y="655" width="3.1" height="78.5" fill="#ab8ba8"/><rect x="1257.9" y="655" width="1.9" height="78.5" fill="#8d7091"/><rect x="1259.8" y="655" width="3.1" height="77.2" fill="#ab8ba8"/><rect x="1262.8" y="655" width="1.9" height="77.2" fill="#8d7091"/><polygon points="1244.7,648.5 1251,646.3 1267,647.5 1267,654.9 1244.7,654.9" fill="#a0819d"/><polygon points="1244.7,648.5 1251,646.3 1251,654.9 1244.7,652" fill="#b192ae"/></g>
<g transform="translate(480.60,-41.12)"><rect x="1228.4" y="618" width="10.4" height="22" fill="#7683bb"/><rect x="1228.4" y="618" width="2" height="22" fill="#8e9bd3"/><polygon points="1221.3,640.4 1229,638.6 1246,640 1246,647.2 1221.3,647.2" fill="#a0819d"/><polygon points="1221.3,640.4 1229,638.6 1229,647.2 1221.3,643.6" fill="#b192ae"/><rect x="1224.0" y="647" width="3.1" height="78.8" fill="#ab8ba8"/><rect x="1227.0" y="647" width="1.9" height="78.8" fill="#8d7091"/><rect x="1228.8" y="647" width="3.1" height="77.6" fill="#ab8ba8"/><rect x="1231.8" y="647" width="1.9" height="77.6" fill="#8d7091"/><rect x="1233.7" y="647" width="3.1" height="78.8" fill="#ab8ba8"/><rect x="1236.7" y="647" width="1.9" height="78.8" fill="#8d7091"/><rect x="1238.5" y="647" width="3.1" height="77.6" fill="#ab8ba8"/><rect x="1241.5" y="647" width="1.9" height="77.6" fill="#8d7091"/><polygon points="1233,619 1250,617.3 1262,617.3 1266,620 1257,624.5 1240,622.5" fill="#88a0e6"/><polygon points="1257,624.5 1266,620 1265.5,625.5 1258.5,628.8" fill="#6c7db0"/><rect x="1249.7" y="623.5" width="10.4" height="24" fill="#7381b8"/><rect x="1249.7" y="623.5" width="1.8" height="24" fill="#8e9cd4"/><rect x="1245.2" y="655" width="3.1" height="78.5" fill="#ab8ba8"/><rect x="1248.2" y="655" width="1.9" height="78.5" fill="#8d7091"/><rect x="1250.0" y="655" width="3.1" height="77.2" fill="#ab8ba8"/><rect x="1253.0" y="655" width="1.9" height="77.2" fill="#8d7091"/><rect x="1254.9" y="655" width="3.1" height="78.5" fill="#ab8ba8"/><rect x="1257.9" y="655" width="1.9" height="78.5" fill="#8d7091"/><rect x="1259.8" y="655" width="3.1" height="77.2" fill="#ab8ba8"/><rect x="1262.8" y="655" width="1.9" height="77.2" fill="#8d7091"/><polygon points="1244.7,648.5 1251,646.3 1267,647.5 1267,654.9 1244.7,654.9" fill="#a0819d"/><polygon points="1244.7,648.5 1251,646.3 1251,654.9 1244.7,652" fill="#b192ae"/></g>
</svg><!--/BRIDGE-->
<!-- STATUS -->
<div class="t" style="left:25.8px;top:1088.3px">Ready</div>

</body></html>
